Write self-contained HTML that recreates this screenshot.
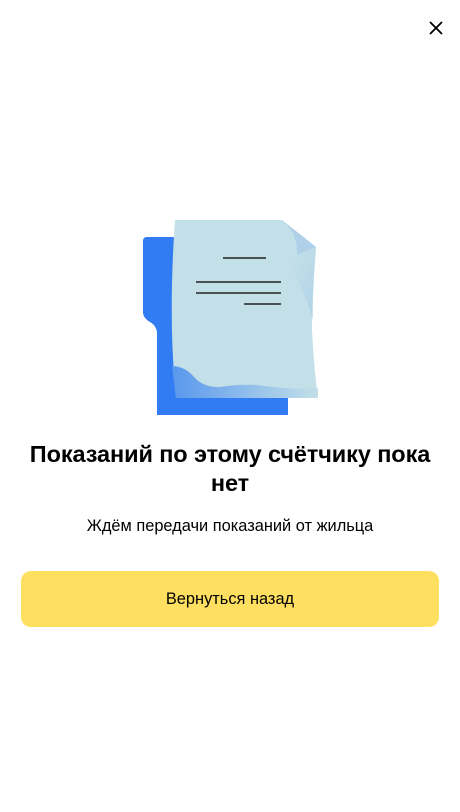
<!DOCTYPE html>
<html><head><meta charset="utf-8"><style>
body{margin:0;width:460px;height:812px;background:#fff;font-family:"Liberation Sans",sans-serif;position:relative;overflow:hidden}
h1{position:absolute;top:440px;left:0;width:460px;text-align:center;margin:0;font-size:23.5px;font-weight:bold;line-height:29px;color:#000;letter-spacing:-0.1px}
.sub{position:absolute;top:517px;left:0;width:460px;text-align:center;font-size:16.4px;color:#000}
.btn{position:absolute;left:21px;top:571px;width:418px;height:56px;border-radius:10px;background:#ffdf60;text-align:center;line-height:56px;font-size:16.4px;color:#000}
</style></head><body>
<svg style="position:absolute;left:429px;top:21px" width="14" height="14" viewBox="0 0 14 14"><path d="M1 1L13 13M13 1L1 13" stroke="#000" stroke-width="1.8"/></svg>
<svg style="position:absolute;left:0;top:0" width="460" height="430" viewBox="0 0 460 430">
<defs>
<linearGradient id="c" x1="0" y1="0" x2="1" y2="1"><stop offset="0.5" stop-color="#c3e0e8"/><stop offset="1" stop-color="#a3c6ea"/></linearGradient>
<linearGradient id="b" x1="0" y1="0" x2="1" y2="0"><stop offset="0" stop-color="#5a98ee"/><stop offset="1" stop-color="#c3e0e8"/></linearGradient>
</defs>
<path d="M147 237H288V415H157V334Q157 326 150 322Q143 318 143 312V241Q143 237 147 237Z" fill="#317cf2"/>
<path d="M175 220H282L316 247Q312 300 312 330Q314 370 318 398H176Q168 320 175 220Z" fill="#c3e0e8"/>
<path d="M255 220H282L316 247Q312 300 313 320Q300 270 255 220Z" fill="url(#c)" opacity="0.6"/>
<path d="M282 220Q298 232 297 255L316 247Z" fill="#b0d0ea"/>
<path d="M172 366Q185 366 195 378Q205 388 220 387Q245 383 265 386Q290 390 318 388L318 398H176Z" fill="url(#b)"/>
<g stroke="#222" stroke-width="1.6"><path d="M223 258H266M196 282H281M196 293H281M244 304H281"/></g>
</svg>
<h1>Показаний по этому счётчику пока<br>нет</h1>
<div class="sub">Ждём передачи показаний от жильца</div>
<div class="btn">Вернуться назад</div>
</body></html>
